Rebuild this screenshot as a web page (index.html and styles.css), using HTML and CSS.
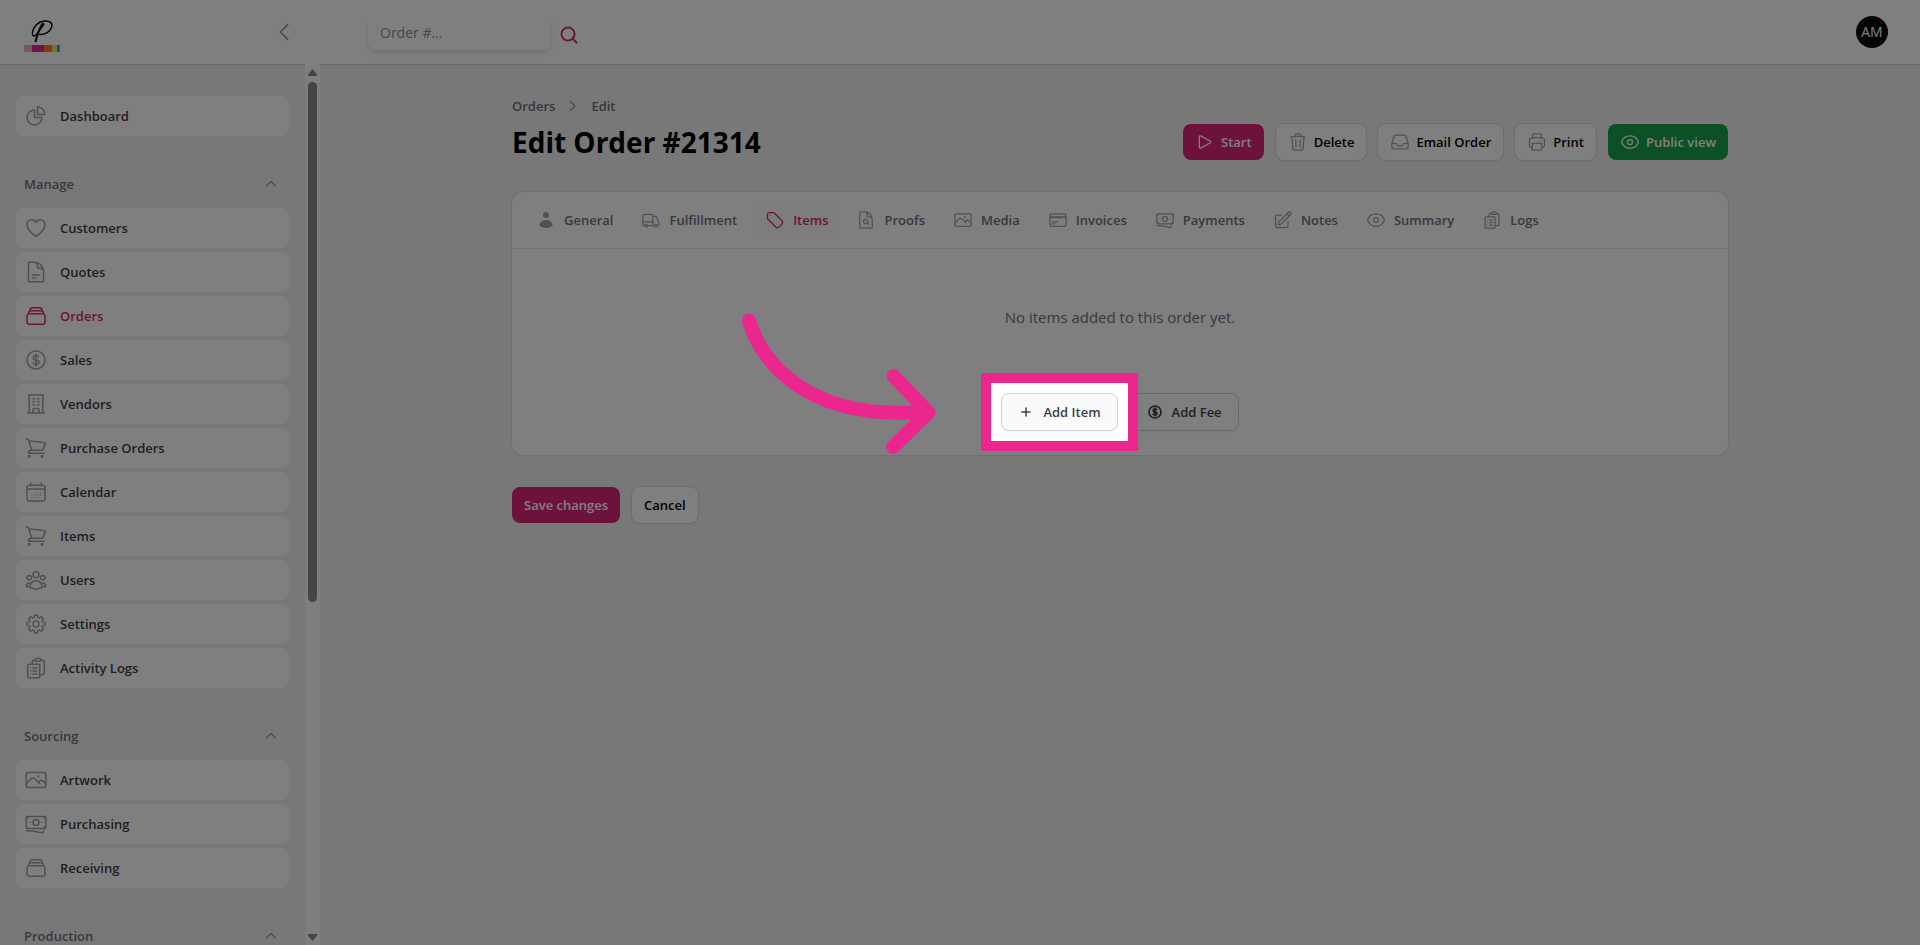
FILE: index.html
```
<!DOCTYPE html>
<html lang="en">
<head>
<meta charset="utf-8">
<title>Edit Order #21314</title>
<link rel="stylesheet" href="styles.css">
</head>
<body>
<svg class="sprite" aria-hidden="true">
  <symbol id="i-pie" viewBox="0 0 24 24"><path d="M10.5 6a7.5 7.5 0 107.5 7.5h-7.5V6z"/><path d="M13.5 10.5H21A7.5 7.5 0 0013.5 3v7.5z"/></symbol>
  <symbol id="i-heart" viewBox="0 0 24 24"><path d="M21 8.25c0-2.485-2.099-4.5-4.688-4.5-1.935 0-3.597 1.126-4.312 2.733-.715-1.607-2.377-2.733-4.313-2.733C5.1 3.75 3 5.765 3 8.25c0 7.22 9 12 9 12s9-4.78 9-12z"/></symbol>
  <symbol id="i-doc" viewBox="0 0 24 24"><path d="M19.5 14.25v-2.625a3.375 3.375 0 00-3.375-3.375h-1.5A1.125 1.125 0 0113.5 7.125v-1.5a3.375 3.375 0 00-3.375-3.375H8.25m0 12.75h7.5m-7.5 3H12M10.5 2.25H5.625c-.621 0-1.125.504-1.125 1.125v17.25c0 .621.504 1.125 1.125 1.125h12.75c.621 0 1.125-.504 1.125-1.125V11.25a9 9 0 00-9-9z"/></symbol>
  <symbol id="i-stack" viewBox="0 0 24 24"><path d="M6 6.878V6a2.25 2.25 0 012.25-2.25h7.5A2.25 2.25 0 0118 6v.878m-12 0c.235-.083.487-.128.75-.128h10.5c.263 0 .515.045.75.128m-12 0A2.25 2.25 0 004.5 9v.878m13.5-3A2.25 2.25 0 0119.5 9v.878m0 0a2.246 2.246 0 00-.75-.128H5.25c-.263 0-.515.045-.75.128m15 0A2.25 2.25 0 0121 12v6a2.25 2.25 0 01-2.25 2.25H5.25A2.25 2.25 0 013 18v-6c0-.98.626-1.813 1.5-2.122"/></symbol>
  <symbol id="i-dollar" viewBox="0 0 24 24"><path d="M12 6v12m-3-2.818l.879.659c1.171.879 3.07.879 4.242 0 1.172-.879 1.172-2.303 0-3.182C13.536 12.219 12.768 12 12 12c-.725 0-1.45-.22-2.003-.659-1.106-.879-1.106-2.303 0-3.182s2.9-.879 4.006 0l.415.33M21 12a9 9 0 11-18 0 9 9 0 0118 0z"/></symbol>
  <symbol id="i-building" viewBox="0 0 24 24"><path d="M3.75 21h16.5M4.5 3h15M5.25 3v18m13.5-18v18M9 6.75h1.5m-1.5 3h1.5m-1.5 3h1.5m3-6H15m-1.500 3H15m-1.500 3H15M9 21v-3.375c0-.621.504-1.125 1.125-1.125h3.750c.621 0 1.125.504 1.125 1.125V21"/></symbol>
  <symbol id="i-cart" viewBox="0 0 24 24"><path d="M2.250 3h1.386c.51 0 .955.343 1.087.835l.383 1.437M7.500 14.250a3 3 0 00-3 3h15.750m-12.750-3h11.218c1.121-2.300 2.100-4.684 2.924-7.138a60.114 60.114 0 00-16.536-1.840M7.500 14.250L5.106 5.272M6 20.250a.75.75 0 11-1.500 0 .75.75 0 011.500 0zm12.750 0a.75.75 0 11-1.500 0 .75.75 0 011.500 0z"/></symbol>
  <symbol id="i-calendar" viewBox="0 0 24 24"><path d="M6.750 3v2.250M17.250 3v2.250M3 18.750V7.500a2.250 2.250 0 012.250-2.250h13.500A2.250 2.250 0 0121 7.500v11.250m-18 0A2.250 2.250 0 005.250 21h13.500A2.250 2.250 0 0021 18.750m-18 0v-7.500A2.250 2.250 0 015.250 9h13.500A2.250 2.250 0 0121 11.250v7.500"/><path stroke-width="1.2" d="M12 12.750h.008v.008H12v-.008zM12 15h.008v.008H12V15zm0 2.250h.008v.008H12v-.008zM9.750 15h.008v.008H9.750V15zm0 2.250h.008v.008H9.750v-.008zM7.500 15h.008v.008H7.500V15zm0 2.250h.008v.008H7.500v-.008zm6.750-4.500h.008v.008h-.008v-.008zm0 2.250h.008v.008h-.008V15zm0 2.250h.008v.008h-.008v-.008zm2.250-4.500h.008v.008H16.500v-.008zm0 2.250h.008v.008H16.500V15z"/></symbol>
  <symbol id="i-users" viewBox="0 0 24 24"><path d="M18 18.720a9.094 9.094 0 003.741-.479 3 3 0 00-4.682-2.720m.94 3.198l.001.031c0 .225-.012.447-.037.666A11.944 11.944 0 0112 21c-2.170 0-4.207-.576-5.963-1.584A6.062 6.062 0 016 18.719m12 0a5.971 5.971 0 00-.941-3.197m0 0A5.995 5.995 0 0012 12.750a5.995 5.995 0 00-5.058 2.772m0 0a3 3 0 00-4.681 2.720 8.986 8.986 0 003.740.477m.94-3.197a5.971 5.971 0 00-.94 3.197M15 6.750a3 3 0 11-6 0 3 3 0 016 0zm6 3a2.250 2.250 0 11-4.500 0 2.250 2.250 0 014.500 0zm-13.500 0a2.250 2.250 0 11-4.500 0 2.250 2.250 0 014.500 0z"/></symbol>
  <symbol id="i-cog" viewBox="0 0 24 24"><path d="M10.340 3.940c.090-.542.560-.940 1.110-.940h1.094c.550 0 1.020.398 1.110.940l.149.894c.070.424.384.764.780.930.398.164.855.142 1.205-.108l.737-.527a1.125 1.125 0 011.450.120l.773.774c.390.389.440 1.002.120 1.450l-.527.737c-.250.350-.272.806-.107 1.204.165.397.505.710.930.780l.893.150c.543.090.940.560.940 1.109v1.094c0 .550-.397 1.020-.940 1.110l-.893.149c-.425.070-.765.383-.930.780-.165.398-.143.854.107 1.204l.527.738c.320.447.269 1.060-.120 1.450l-.774.773a1.125 1.125 0 01-1.449.120l-.738-.527c-.350-.250-.806-.272-1.203-.107-.397.165-.710.505-.781.929l-.149.894c-.090.542-.560.940-1.110.940h-1.094c-.550 0-1.019-.398-1.110-.940l-.148-.894c-.071-.424-.384-.764-.781-.930-.398-.164-.854-.142-1.204.108l-.738.527c-.447.320-1.060.269-1.450-.120l-.773-.774a1.125 1.125 0 01-.120-1.450l.527-.737c.250-.350.273-.806.108-1.204-.165-.397-.505-.710-.930-.780l-.894-.150c-.542-.090-.940-.560-.940-1.109v-1.094c0-.550.398-1.020.940-1.110l.894-.149c.424-.070.765-.383.930-.780.165-.398.143-.854-.107-1.204l-.527-.738a1.125 1.125 0 01.120-1.450l.773-.773a1.125 1.125 0 011.450-.120l.737.527c.350.250.807.272 1.204.107.397-.165.710-.505.780-.929l.150-.894z"/><path d="M15 12a3 3 0 11-6 0 3 3 0 016 0z"/></symbol>
  <symbol id="i-clips" viewBox="0 0 24 24"><path d="M9 12h3.750M9 15h3.750M9 18h3.750m3 .750H18a2.250 2.250 0 002.250-2.250V6.108c0-1.135-.845-2.098-1.976-2.192a48.424 48.424 0 00-1.123-.080m-5.801 0c-.065.210-.100.433-.100.664 0 .414.336.750.750.750h4.500a.750.750 0 00.750-.750 2.250 2.250 0 00-.100-.664m-5.800 0A2.251 2.251 0 0113.500 2.250H15c1.012 0 1.867.668 2.150 1.586m-5.800 0c-.376.023-.750.050-1.124.080C9.095 4.010 8.250 4.973 8.250 6.108V8.250m0 0H4.875c-.621 0-1.125.504-1.125 1.125v11.250c0 .621.504 1.125 1.125 1.125h9.750c.621 0 1.125-.504 1.125-1.125V9.375c0-.621-.504-1.125-1.125-1.125H8.250zM6.750 12h.008v.008H6.750V12zm0 3h.008v.008H6.750V15zm0 3h.008v.008H6.750V18z"/></symbol>
  <symbol id="i-photo" viewBox="0 0 24 24"><path d="M2.250 15.750l5.159-5.159a2.250 2.250 0 013.182 0l5.159 5.159m-1.500-1.500l1.409-1.409a2.250 2.250 0 013.182 0l2.909 2.909m-18 3.750h16.500a1.500 1.500 0 001.500-1.500V6a1.500 1.500 0 00-1.500-1.500H3.750A1.500 1.500 0 002.250 6v12a1.500 1.500 0 001.500 1.500zm10.500-11.250h.008v.008h-.008V8.250zm.375 0a.375.375 0 11-.750 0 .375.375 0 01.750 0z"/></symbol>
  <symbol id="i-cash" viewBox="0 0 24 24"><path d="M2.250 18.750a60.070 60.070 0 0115.797 2.101c.727.198 1.453-.342 1.453-1.096V18.750M3.750 4.500v.750A.750.750 0 013 6h-.750m0 0v-.375c0-.621.504-1.125 1.125-1.125H20.250M2.250 6v9m18-10.500v.750c0 .414.336.750.750.750h.750m-1.500-1.500h.375c.621 0 1.125.504 1.125 1.125v9.750c0 .621-.504 1.125-1.125 1.125h-.375m1.500-1.500H21a.750.750 0 00-.750.750v.750m0 0H3.750m0 0h-.375a1.125 1.125 0 01-1.125-1.125V15m1.500 1.500v-.750A.750.750 0 003 15h-.750M15 10.500a3 3 0 11-6 0 3 3 0 016 0zm3 0h.008v.008H18V10.500zm-12 0h.008v.008H6V10.500z"/></symbol>
  <symbol id="i-truck" viewBox="0 0 24 24"><path d="M8.250 18.750a1.500 1.500 0 01-3 0m3 0a1.500 1.500 0 00-3 0m3 0h6m-9 0H3.375a1.125 1.125 0 01-1.125-1.125V14.250m17.250 4.500a1.500 1.500 0 01-3 0m3 0a1.500 1.500 0 00-3 0m3 0h1.125c.621 0 1.129-.504 1.090-1.124a17.902 17.902 0 00-3.213-9.193 2.056 2.056 0 00-1.580-.860H14.250M16.500 18.750h-2.250m0-11.177v-.958c0-.568-.422-1.048-.987-1.106a48.554 48.554 0 00-10.026 0 1.106 1.106 0 00-.987 1.106v7.635m12-6.677v6.677m0 4.500v-4.500m0 0h-12"/></symbol>
  <symbol id="i-tag" viewBox="0 0 24 24"><path d="M9.568 3H5.250A2.250 2.250 0 003 5.250v4.318c0 .597.237 1.170.659 1.591l9.581 9.581c.699.699 1.780.872 2.607.330a18.095 18.095 0 005.223-5.223c.542-.827.369-1.908-.330-2.607L11.160 3.660A2.250 2.250 0 009.568 3z"/><path d="M6 6h.008v.008H6V6z"/></symbol>
  <symbol id="i-docsearch" viewBox="0 0 24 24"><path d="M19.500 14.250v-2.625a3.375 3.375 0 00-3.375-3.375h-1.500A1.125 1.125 0 0113.500 7.125v-1.500a3.375 3.375 0 00-3.375-3.375H8.250m5.231 13.481L15 17.250m-4.500-15H5.625c-.621 0-1.125.504-1.125 1.125v17.250c0 .621.504 1.125 1.125 1.125h12.750c.621 0 1.125-.504 1.125-1.125V11.250a9 9 0 00-9-9zm3.750 11.625a2.625 2.625 0 11-5.250 0 2.625 2.625 0 015.250 0z"/></symbol>
  <symbol id="i-card" viewBox="0 0 24 24"><path d="M2.250 8.250h19.500M2.250 9h19.500m-16.500 5.250h6m-6 2.250h3m-3.750 3h15a2.250 2.250 0 002.250-2.250V6.750A2.250 2.250 0 0019.500 4.500h-15a2.250 2.250 0 00-2.250 2.250v10.500A2.250 2.250 0 004.500 19.500z"/></symbol>
  <symbol id="i-pencil" viewBox="0 0 24 24"><path d="M16.862 4.487l1.687-1.688a1.875 1.875 0 112.652 2.652L10.582 16.070a4.500 4.500 0 01-1.897 1.130L6 18l.800-2.685a4.500 4.500 0 011.130-1.897l8.932-8.931zm0 0L19.500 7.125M18 14v4.750A2.250 2.250 0 0115.750 21H5.250A2.250 2.250 0 013 18.750V8.250A2.250 2.250 0 015.250 6H10"/></symbol>
  <symbol id="i-eye" viewBox="0 0 24 24"><path d="M2.036 12.322a1.012 1.012 0 010-.639C3.423 7.510 7.360 4.500 12 4.500c4.638 0 8.573 3.007 9.963 7.178.070.207.070.431 0 .639C20.577 16.490 16.640 19.500 12 19.500c-4.638 0-8.573-3.007-9.963-7.178z"/><path d="M15 12a3 3 0 11-6 0 3 3 0 016 0z"/></symbol>
  <symbol id="i-play" viewBox="0 0 24 24"><path d="M5.250 5.653c0-.856.917-1.398 1.667-.986l11.540 6.348a1.125 1.125 0 010 1.971l-11.540 6.347a1.125 1.125 0 01-1.667-.985V5.653z"/></symbol>
  <symbol id="i-trash" viewBox="0 0 24 24"><path d="M14.740 9l-.346 9m-4.788 0L9.260 9m9.968-3.210c.342.052.682.107 1.022.166m-1.022-.165L18.160 19.673a2.250 2.250 0 01-2.244 2.077H8.084a2.250 2.250 0 01-2.244-2.077L4.772 5.790m14.456 0a48.108 48.108 0 00-3.478-.397m-12 .562c.340-.059.680-.114 1.022-.165m0 0a48.110 48.110 0 013.478-.397m7.500 0v-.916c0-1.180-.910-2.164-2.090-2.201a51.964 51.964 0 00-3.320 0c-1.180.037-2.090 1.022-2.090 2.201v.916m7.500 0a48.667 48.667 0 00-7.500 0"/></symbol>
  <symbol id="i-inbox" viewBox="0 0 24 24"><path d="M2.250 13.500h3.860a2.250 2.250 0 012.012 1.244l.256.512a2.250 2.250 0 002.013 1.244h3.218a2.250 2.250 0 002.013-1.244l.256-.512a2.250 2.250 0 012.013-1.244h3.859m-19.500.338V18a2.250 2.250 0 002.250 2.250h15A2.250 2.250 0 0021.750 18v-4.162c0-.224-.034-.447-.100-.661L19.240 5.338a2.250 2.250 0 00-2.150-1.588H6.911a2.250 2.250 0 00-2.150 1.588L2.350 13.177a2.250 2.250 0 00-.100.661z"/></symbol>
  <symbol id="i-print" viewBox="0 0 24 24"><path d="M6.720 13.829c-.240.030-.480.062-.720.096m.720-.096a42.415 42.415 0 0110.560 0m-10.560 0L6.340 18m10.940-4.171c.240.030.480.062.720.096m-.720-.096L17.660 18m0 0l.229 2.523a1.125 1.125 0 01-1.120 1.227H7.231c-.662 0-1.180-.568-1.120-1.227L6.340 18m11.318 0h1.091A2.250 2.250 0 0021 15.750V9.456c0-1.081-.768-2.015-1.837-2.175a48.055 48.055 0 00-1.913-.247M6.340 18H5.250A2.250 2.250 0 013 15.750V9.456c0-1.081.768-2.015 1.837-2.175a48.041 48.041 0 011.913-.247m10.500 0a48.536 48.536 0 00-10.500 0m10.500 0V3.375c0-.621-.504-1.125-1.125-1.125h-8.250c-.621 0-1.125.504-1.125 1.125v3.659M18 10.500h.008v.008H18V10.500zm-3 0h.008v.008H15V10.500z"/></symbol>
  <symbol id="i-up" viewBox="0 0 20 20"><path d="M5.500 12l4.500-4.500 4.500 4.500"/></symbol>
  <symbol id="i-right" viewBox="0 0 20 20"><path d="M7.500 5.500l4.500 4.500-4.500 4.500"/></symbol>
  <symbol id="i-left" viewBox="0 0 24 24"><path d="M15.750 19.500L8.250 12l7.500-7.500"/></symbol>
  <symbol id="i-search" viewBox="0 0 20 20"><circle cx="9" cy="9" r="6.500"/><path d="M13.700 13.700L17.500 17.500"/></symbol>
  <symbol id="i-plus" viewBox="0 0 16 16"><path d="M8 4v8M4 8h8"/></symbol>
</svg>

<header class="topbar">
  <div class="brand">
    <a href="#" class="logo" aria-label="Home">
      <svg width="36" height="34" viewBox="0 0 36 34">
        <path d="M19 4C15.500 9 13 16 11.500 23" fill="none" stroke="#000" stroke-width="2"/>
        <path d="M20 5c-3 5-6 9.500-9 11.500-2 1.200-3-.500-2.500-3.500C9.500 7 14.500 2.500 20.500 2c5.500-.500 8.500 2 7 6.500C26 13 20.500 16 15.500 15.500" fill="none" stroke="#000" stroke-width="1.400" stroke-linecap="round"/>
        <path d="M0 26h8v7H0z" fill="#f5a8d0"/><path d="M8 26h12v7H8z" fill="#ec1f9c"/><path d="M20 26h8v7h-8z" fill="#f0782c"/><path d="M28 26h5v7h-5z" fill="#f2e546"/><path d="M33 26h3v7h-3z" fill="#1fb4e6"/>
      </svg>
    </a>
    <button class="collapse" aria-label="Collapse sidebar"><svg class="icon icon-lg"><use href="#i-left"/></svg></button>
  </div>
  <form class="search">
    <input type="text" placeholder="Order #..." aria-label="Order number">
    <button type="button" aria-label="Search"><svg class="icon icon-md"><use href="#i-search"/></svg></button>
  </form>
  <button class="avatar">AM</button>
</header>

<div class="shell">
  <aside class="sidebar">
    <nav class="menu">
      <div class="group">
        <a class="item" href="#"><svg class="icon icon-lg"><use href="#i-pie"/></svg>Dashboard</a>
      </div>
      <div class="group">
        <button class="heading">Manage<svg class="icon icon-md"><use href="#i-up"/></svg></button>
        <a class="item" href="#"><svg class="icon icon-lg"><use href="#i-heart"/></svg>Customers</a>
        <a class="item" href="#"><svg class="icon icon-lg"><use href="#i-doc"/></svg>Quotes</a>
        <a class="item active" href="#"><svg class="icon icon-lg"><use href="#i-stack"/></svg>Orders</a>
        <a class="item" href="#"><svg class="icon icon-lg"><use href="#i-dollar"/></svg>Sales</a>
        <a class="item" href="#"><svg class="icon icon-lg"><use href="#i-building"/></svg>Vendors</a>
        <a class="item" href="#"><svg class="icon icon-lg"><use href="#i-cart"/></svg>Purchase Orders</a>
        <a class="item" href="#"><svg class="icon icon-lg"><use href="#i-calendar"/></svg>Calendar</a>
        <a class="item" href="#"><svg class="icon icon-lg"><use href="#i-cart"/></svg>Items</a>
        <a class="item" href="#"><svg class="icon icon-lg"><use href="#i-users"/></svg>Users</a>
        <a class="item" href="#"><svg class="icon icon-lg"><use href="#i-cog"/></svg>Settings</a>
        <a class="item" href="#"><svg class="icon icon-lg"><use href="#i-clips"/></svg>Activity Logs</a>
      </div>
      <div class="group">
        <button class="heading">Sourcing<svg class="icon icon-md"><use href="#i-up"/></svg></button>
        <a class="item" href="#"><svg class="icon icon-lg"><use href="#i-photo"/></svg>Artwork</a>
        <a class="item" href="#"><svg class="icon icon-lg"><use href="#i-cash"/></svg>Purchasing</a>
        <a class="item" href="#"><svg class="icon icon-lg"><use href="#i-stack"/></svg>Receiving</a>
      </div>
      <div class="group">
        <button class="heading">Production<svg class="icon icon-md"><use href="#i-up"/></svg></button>
      </div>
    </nav>
    <div class="scrollbar" aria-hidden="true">
      <svg width="9" height="7" viewBox="0 0 9 7"><path d="M4.500 0L9 5.500V7H0V5.500z"/></svg>
      <div class="track"><div class="thumb"></div></div>
      <svg width="9" height="7" viewBox="0 0 9 7"><path d="M4.500 7L9 1.500V0H0v1.500z"/></svg>
    </div>
  </aside>

  <main class="main">
    <div class="page-head">
      <div>
        <nav class="crumbs" aria-label="Breadcrumb"><a href="#">Orders</a><svg class="icon icon-md"><use href="#i-right"/></svg><a href="#">Edit</a></nav>
        <h1>Edit Order #21314</h1>
      </div>
      <div class="actions">
        <button class="btn primary"><svg class="icon icon-md"><use href="#i-play"/></svg>Start</button>
        <button class="btn"><svg class="icon icon-md"><use href="#i-trash"/></svg>Delete</button>
        <button class="btn"><svg class="icon icon-md"><use href="#i-inbox"/></svg>Email Order</button>
        <button class="btn"><svg class="icon icon-md"><use href="#i-print"/></svg>Print</button>
        <button class="btn success"><svg class="icon icon-md"><use href="#i-eye"/></svg>Public view</button>
      </div>
    </div>

    <section class="card">
      <nav class="tabs" role="tablist">
        <button class="tab" role="tab"><svg class="icon-md solid" viewBox="0 0 20 20"><path d="M10 8a3 3 0 100-6 3 3 0 000 6zM3.465 14.493a1.230 1.230 0 00.410 1.412A9.957 9.957 0 0010 18c2.310 0 4.438-.784 6.131-2.100.430-.333.604-.903.408-1.410a7.002 7.002 0 00-13.074.003z"/></svg>General</button>
        <button class="tab" role="tab"><svg class="icon icon-md"><use href="#i-truck"/></svg>Fulfillment</button>
        <button class="tab active" role="tab" aria-selected="true"><svg class="icon icon-md"><use href="#i-tag"/></svg>Items</button>
        <button class="tab" role="tab"><svg class="icon icon-md"><use href="#i-docsearch"/></svg>Proofs</button>
        <button class="tab" role="tab"><svg class="icon icon-md"><use href="#i-photo"/></svg>Media</button>
        <button class="tab" role="tab"><svg class="icon icon-md"><use href="#i-card"/></svg>Invoices</button>
        <button class="tab" role="tab"><svg class="icon icon-md"><use href="#i-cash"/></svg>Payments</button>
        <button class="tab" role="tab"><svg class="icon icon-md"><use href="#i-pencil"/></svg>Notes</button>
        <button class="tab" role="tab"><svg class="icon icon-md"><use href="#i-eye"/></svg>Summary</button>
        <button class="tab" role="tab"><svg class="icon icon-md"><use href="#i-clips"/></svg>Logs</button>
      </nav>
      <div class="panel">
        <p>No items added to this order yet.</p>
        <div class="adders">
          <div class="focus">
            <button class="add"><svg class="icon icon-sm"><use href="#i-plus"/></svg>Add Item</button>
            <div class="spotlight"></div>
            <svg class="arrow" viewBox="0 0 188 142" aria-hidden="true"><path d="M9 10.500C20 50 65 108 174 102.500h10M153.500 66l35 36.500-35.500 34.500"/></svg>
          </div>
          <button class="add fee"><svg class="icon icon-sm"><use href="#i-dollar"/></svg>Add Fee</button>
        </div>
      </div>
    </section>

    <div class="footer">
      <button class="btn primary">Save changes</button>
      <button class="btn">Cancel</button>
    </div>
  </main>
</div>
</body>
</html>
```
FILE: styles.css
```
* { box-sizing: border-box; }
body {
  margin: 0;
  height: 100vh;
  display: flex;
  flex-direction: column;
  overflow: hidden;
  background: #f0f0f0;
  color: #000;
  font: 600 13px/20px "Open Sans", "Noto Sans", sans-serif;
}
button, input { font: inherit; color: inherit; }
button { border: 0; background: none; padding: 0; cursor: pointer; }
a { color: inherit; text-decoration: none; }
.sprite { position: absolute; width: 0; height: 0; }
.icon { fill: none; stroke: currentColor; stroke-width: 1.5; stroke-linecap: round; stroke-linejoin: round; flex: none; }
.icon-lg { width: 24px; height: 24px; }
.icon-md { width: 20px; height: 20px; }
.icon-sm { width: 16px; height: 16px; }
.solid { fill: #a1a1aa; flex: none; }

.topbar {
  flex: none;
  height: 64px;
  display: flex;
  align-items: center;
  padding-right: 32px;
  background: #fff;
  box-shadow: 0 1px 1px #d4d4d8;
}
.brand { width: 320px; display: flex; align-items: center; justify-content: space-between; padding: 0 24px; }
.logo { display: flex; padding-top: 8px; }
.collapse { display: flex; color: #8a8a92; }
.search { display: flex; align-items: center; gap: 8px; margin-left: 48px; }
.search input {
  width: 183px;
  height: 36px;
  padding: 0 12px;
  border: 0;
  border-radius: 8px;
  background: #fff;
  font-weight: 400;
  font-size: 14px;
  box-shadow: 0 4px 6px -1px rgba(0,0,0,.1), 0 2px 4px -2px rgba(0,0,0,.1);
}
.search input::placeholder { color: #8f8f97; }
.search button { display: flex; color: #db2777; padding-top: 6px; }
.search .icon { stroke-width: 2; }
.avatar { margin-left: auto; width: 32px; height: 32px; border-radius: 50%; background: #09090b; color: #fff; font-weight: 400; font-size: 14px; }

.shell { flex: 1; min-height: 0; display: flex; }
.sidebar { width: 320px; flex: none; display: flex; }
.menu { flex: 1; overflow: hidden; padding: 32px 16px; display: flex; flex-direction: column; gap: 28px; }
.group { display: flex; flex-direction: column; gap: 4px; flex: none; }
.item { display: flex; align-items: center; gap: 12px; height: 40px; padding: 0 8px; border-radius: 8px; background: #fff; color: #3f3f46; }
.item .icon { color: #a1a1aa; }
.item.active, .item.active .icon { color: #db2777; }
.heading { display: flex; align-items: center; justify-content: space-between; height: 40px; padding: 0 8px; color: #71717a; }
.heading .icon { color: #a1a1aa; }
.scrollbar { width: 15px; flex: none; display: flex; flex-direction: column; align-items: center; gap: 6px; padding: 5px 0 4px; background: #fcfcfc; fill: #8b8b8b; }
.track { flex: 1; }
.thumb { width: 9px; height: 61.5%; border-radius: 5px; background: #8b8b8b; }

.main { flex: 1; max-width: 1280px; margin: 0 auto; padding: 32px; }
.page-head { display: flex; align-items: center; justify-content: space-between; margin-bottom: 32px; }
.crumbs { display: flex; align-items: center; gap: 8px; color: #71717a; }
.crumbs .icon { color: #a1a1aa; }
h1 { margin: 8px 0 0; font-size: 28px; line-height: 36px; font-weight: 700; }
.actions { display: flex; gap: 12px; padding-top: 28px; }
.btn { display: inline-flex; align-items: center; gap: 6px; height: 36px; padding: 0 12px; border-radius: 8px; background: #fff; box-shadow: 0 0 0 1px #d8d8dc, 0 1px 2px rgba(0,0,0,.1); }
.btn .icon { color: #a1a1aa; }
.btn.primary { background: #db2777; color: #fff; box-shadow: none; }
.btn.success { background: #16a34a; color: #fff; box-shadow: none; }
.btn.primary .icon, .btn.success .icon { color: #fff; }

.card { border-radius: 12px; background: #fff; box-shadow: 0 0 0 1px #e0e0e3, 0 1px 2px rgba(0,0,0,.08); }
.tabs { display: flex; gap: 4px; padding: 10px 12px; border-bottom: 1px solid #e0e0e3; }
.tab { display: flex; align-items: center; gap: 8px; height: 36px; padding: 0 12px; border-radius: 8px; color: #71717a; }
.tab .icon { color: #a1a1aa; }
.tab.active { background: #fafafa; }
.tab.active, .tab.active .icon { color: #db2777; }
.panel { display: flex; flex-direction: column; align-items: center; gap: 64px; padding: 56px 24px 24px; }
.panel p { margin: 0; font-size: 15px; line-height: 24px; font-weight: 400; color: #71717a; }
.adders { display: flex; gap: 12px; }
.add { display: flex; align-items: center; gap: 9px; height: 38px; padding: 0 16px; border: 1px solid #d4d4d8; border-radius: 8px; background: #fafafa; color: #3f3f46; box-shadow: 0 1px 2px rgba(0,0,0,.06); }
.add.fee { background: #fff; }
.add.fee .icon { stroke-width: 2.5; }
.focus { position: relative; }
.spotlight { position: absolute; inset: -20px; z-index: 10; border: 10px solid #ec268f; box-shadow: 0 0 0 200vmax rgba(0,0,0,.5); pointer-events: none; }
.arrow { position: absolute; z-index: 11; right: 190px; top: -83px; width: 188px; height: 142px; overflow: visible; fill: none; stroke: #ec268f; stroke-width: 14; stroke-linecap: round; stroke-linejoin: round; }
.footer { display: flex; gap: 12px; margin-top: 32px; }
```
